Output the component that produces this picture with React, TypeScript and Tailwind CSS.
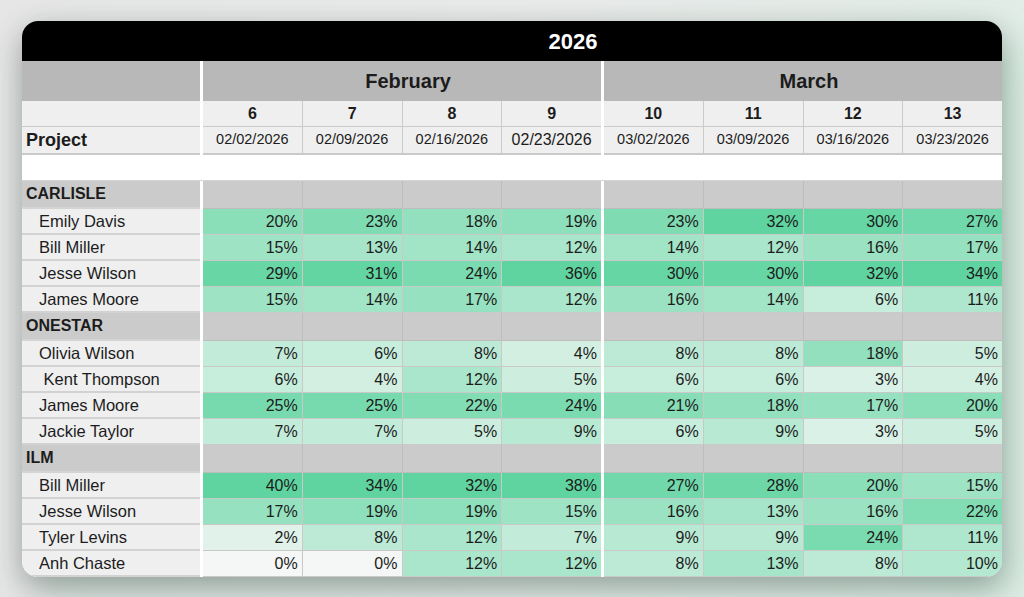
import React from "react";

const weeks = [
  { n: 6, d: "02/02/2026" },
  { n: 7, d: "02/09/2026" },
  { n: 8, d: "02/16/2026" },
  { n: 9, d: "02/23/2026", big: true },
  { n: 10, d: "03/02/2026" },
  { n: 11, d: "03/09/2026" },
  { n: 12, d: "03/16/2026" },
  { n: 13, d: "03/23/2026" },
];

const groups = [
  {
    name: "CARLISLE",
    people: [
      { name: "Emily Davis", v: [20, 23, 18, 19, 23, 32, 30, 27] },
      { name: "Bill Miller", v: [15, 13, 14, 12, 14, 12, 16, 17] },
      { name: "Jesse Wilson", v: [29, 31, 24, 36, 30, 30, 32, 34] },
      { name: "James Moore", v: [15, 14, 17, 12, 16, 14, 6, 11] },
    ],
  },
  {
    name: "ONESTAR",
    people: [
      { name: "Olivia Wilson", v: [7, 6, 8, 4, 8, 8, 18, 5] },
      { name: " Kent Thompson", v: [6, 4, 12, 5, 6, 6, 3, 4] },
      { name: "James Moore", v: [25, 25, 22, 24, 21, 18, 17, 20] },
      { name: "Jackie Taylor", v: [7, 7, 5, 9, 6, 9, 3, 5] },
    ],
  },
  {
    name: "ILM",
    people: [
      { name: "Bill Miller", v: [40, 34, 32, 38, 27, 28, 20, 15] },
      { name: "Jesse Wilson", v: [17, 19, 19, 15, 16, 13, 16, 22] },
      { name: "Tyler Levins", v: [2, 8, 12, 7, 9, 9, 24, 11] },
      { name: "Anh Chaste", v: [0, 0, 12, 12, 8, 13, 8, 10] },
    ],
  },
];

// white -> green colour scale, saturating around 30%
const heat = (v: number) => {
  const t = Math.pow(Math.min(v / 32, 1), 0.72);
  const from = [244, 247, 245];
  const to = [95, 212, 160];
  const c = from.map((f, i) => Math.round(f + (to[i] - f) * t));
  return `rgb(${c[0]},${c[1]},${c[2]})`;
};

const Sep = () => <div className="w-[3px] shrink-0 bg-white" />;

// a row made of the label cell plus two month blocks of four cells
const Row = ({
  label,
  cells,
  className = "",
}: {
  label: React.ReactNode;
  cells: (i: number) => React.ReactNode;
  className?: string;
}) => (
  <div className={`flex ${className}`}>
    {label}
    <Sep />
    <div className="flex flex-1">{[0, 1, 2, 3].map((i) => cells(i))}</div>
    <Sep />
    <div className="flex flex-1">{[4, 5, 6, 7].map((i) => cells(i))}</div>
  </div>
);

export default function App() {
  return (
    <div
      className="min-h-[597px] bg-gradient-to-r from-[#e6e6e6] via-[#eaeaea] to-[#e2ede7] pl-[22px] pr-[22px] pt-[21px] pb-[20px] text-[#1c1c1c]"
      style={{ fontFamily: '"Liberation Sans", Arial, sans-serif' }}
    >
      <div className="w-[980px] overflow-hidden rounded-[16px] bg-white shadow-[0_10px_30px_rgba(0,0,0,0.3),16px_20px_44px_rgba(90,200,150,0.18)]">
        {/* year bar */}
        <div className="flex h-[40px] items-center justify-center bg-black pl-[122px] text-[22px] font-bold text-white">
          2026
        </div>

        {/* months */}
        <div className="flex h-[40px] bg-[#b8b8b8]">
          <div className="w-[178px] shrink-0" />
          <Sep />
          <div className="flex flex-1 items-center justify-center pl-3 text-[20px] font-bold">February</div>
          <Sep />
          <div className="flex flex-1 items-center justify-center pl-3 text-[20px] font-bold">March</div>
        </div>

        {/* week numbers */}
        <Row
          className="h-[26px]"
          label={<div className="w-[178px] shrink-0 border-b border-[#cacaca] bg-[#efefef]" />}
          cells={(i) => (
            <div
              key={i}
              className="flex flex-1 items-center justify-center border-b border-r border-[#cacaca] bg-[#efefef] text-[16px] font-bold last:border-r-0"
            >
              {weeks[i].n}
            </div>
          )}
        />

        {/* dates */}
        <Row
          className="h-[28px]"
          label={
            <div className="flex w-[178px] shrink-0 items-center border-b-2 border-[#cacaca] bg-[#efefef] pl-1 text-[18px] font-bold">
              Project
            </div>
          }
          cells={(i) => (
            <div
              key={i}
              className={`flex flex-1 items-center justify-center border-b-2 border-r border-[#cacaca] bg-[#efefef] last:border-r-0 ${
                weeks[i].big ? "text-[16px]" : "text-[14.5px]"
              }`}
            >
              {weeks[i].d}
            </div>
          )}
        />

        {/* spacer row */}
        <div className="flex h-[26px] border-b border-[#d6d6d6] bg-white">
          <div className="w-[178px] shrink-0" />
          <Sep />
        </div>

        {groups.map((g) => (
          <React.Fragment key={g.name}>
            <Row
              className="h-[28px]"
              label={
                <div className="flex w-[178px] shrink-0 items-center border-b-2 border-[#d4d4d4] bg-[#cbcbcb] pl-1 text-[16px] font-bold">
                  {g.name}
                </div>
              }
              cells={(i) => (
                <div key={i} className="flex-1 border-b border-r border-[#bdbdbd] bg-[#cbcbcb] last:border-r-0" />
              )}
            />
            {g.people.map((p, pi) => (
              <Row
                key={pi}
                className="h-[26px]"
                label={
                  <div className="flex w-[178px] shrink-0 items-center whitespace-pre border-b-2 border-[#d2d2d2] bg-[#efefef] pl-[17px] text-[16.5px]">
                    {p.name}
                  </div>
                }
                cells={(i) => (
                  <div
                    key={i}
                    className="flex flex-1 items-center justify-end border-b border-r border-[#c9c9c9] pr-1 text-[16px] last:border-r-0"
                    style={{ backgroundColor: heat(p.v[i]) }}
                  >
                    {p.v[i]}%
                  </div>
                )}
              />
            ))}
          </React.Fragment>
        ))}
      </div>
    </div>
  );
}
